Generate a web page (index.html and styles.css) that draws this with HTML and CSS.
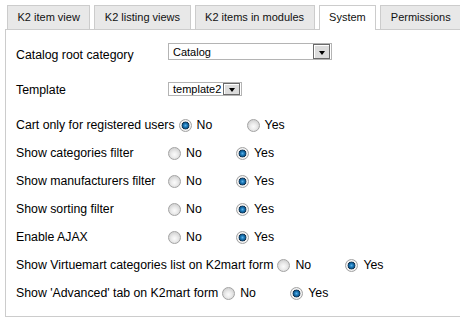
FILE: index.html
```html
<!DOCTYPE html>
<html>
<head>
<meta charset="utf-8">
<link rel="stylesheet" href="styles.css">
</head>
<body>
<div class="wrap">
  <ul class="tabs">
    <li class="tab">K2 item view</li>
    <li class="tab">K2 listing views</li>
    <li class="tab">K2 items in modules</li>
    <li class="tab active">System</li>
    <li class="tab">Permissions</li>
  </ul>
  <div class="panel">
    <div class="row tall">
      <span class="label">Catalog root category</span>
      <div class="select wide"><span class="value">Catalog</span><span class="btn"><span class="tri"></span></span></div>
    </div>
    <div class="row tall">
      <span class="label">Template</span>
      <div class="select small"><span class="value">template2</span><span class="btn"><span class="tri"></span></span></div>
    </div>
    <div class="radios">
      <div class="row">
        <span class="label">Cart only for registered users</span>
        <label class="opt"><input type="radio" name="r1" checked><span>No</span></label>
        <label class="opt"><input type="radio" name="r1"><span>Yes</span></label>
      </div>
      <div class="row">
        <span class="label">Show categories filter</span>
        <label class="opt"><input type="radio" name="r2"><span>No</span></label>
        <label class="opt"><input type="radio" name="r2" checked><span>Yes</span></label>
      </div>
      <div class="row">
        <span class="label">Show manufacturers filter</span>
        <label class="opt"><input type="radio" name="r3"><span>No</span></label>
        <label class="opt"><input type="radio" name="r3" checked><span>Yes</span></label>
      </div>
      <div class="row">
        <span class="label">Show sorting filter</span>
        <label class="opt"><input type="radio" name="r4"><span>No</span></label>
        <label class="opt"><input type="radio" name="r4" checked><span>Yes</span></label>
      </div>
      <div class="row">
        <span class="label">Enable AJAX</span>
        <label class="opt"><input type="radio" name="r5"><span>No</span></label>
        <label class="opt"><input type="radio" name="r5" checked><span>Yes</span></label>
      </div>
      <div class="row">
        <span class="label">Show Virtuemart categories list on K2mart form</span>
        <label class="opt"><input type="radio" name="r6"><span>No</span></label>
        <label class="opt"><input type="radio" name="r6" checked><span>Yes</span></label>
      </div>
      <div class="row">
        <span class="label">Show 'Advanced' tab on K2mart form</span>
        <label class="opt"><input type="radio" name="r7"><span>No</span></label>
        <label class="opt"><input type="radio" name="r7" checked><span>Yes</span></label>
      </div>
    </div>
  </div>
</div>
</body>
</html>
```

FILE: styles.css
```css
html, body {
  margin: 0;
  padding: 0;
  background: #fff;
  overflow: hidden;
}
body {
  font-family: "Liberation Sans", Arial, sans-serif;
  font-size: 12.3px;
  color: #000;
}
.wrap {
  padding: 5px 0 0 5px;
  width: 470px;
}
.tabs {
  list-style: none;
  margin: 0 0 0 2px;
  padding: 0;
  display: flex;
  gap: 4px;
  position: relative;
  z-index: 1;
}
.tab {
  height: 23px;
  line-height: 23px;
  padding: 0 9.5px;
  font-size: 11px;
  background: #e8e8e8;
  border: 1px solid #cccccc;
  border-bottom: none;
  color: #111;
}
.tab.active {
  background: #fff;
  height: 24px;
}
.panel {
  border: 1px solid #cccccc;
  margin-top: -1px;
  padding: 8px 10px 9px 10px;
  width: 460px;
  box-sizing: border-box;
}
.row {
  display: flex;
  align-items: center;
  height: 28px;
  white-space: nowrap;
}
.row.tall {
  height: 35px;
  align-items: flex-start;
}
.row.tall .label {
  margin-top: 10px;
  min-width: 152px;
}
.radios {
  margin-top: 3px;
}
.label {
  min-width: 148px;
}
.opt {
  display: flex;
  align-items: center;
  width: 68px;
}
.opt input {
  -webkit-appearance: none;
  appearance: none;
  width: 13px;
  height: 13px;
  margin: 0 5px 0 4px;
  border-radius: 50%;
  border: 1px solid #a3a3a3;
  background: radial-gradient(circle at 50% 60%, #fbfbfb 0, #ececec 3px, #d6d6d6 6px);
  box-sizing: border-box;
  flex: none;
}
.opt input:checked {
  background: radial-gradient(circle at 50% 50%, #5fb3e8 0, #1f7cbc 1.6px, #0e5a90 2.8px, #16304a 3.6px, #e9e9e9 4.2px, #f4f4f4 5px, #d4d4d4 6px);
}
.select {
  display: flex;
  align-items: center;
  border: 1px solid #b4b4b4;
  background: #fff;
  font-size: 11px;
  box-sizing: border-box;
  margin-top: 5px;
}
.select.wide {
  width: 164px;
  height: 17px;
}
.select.small {
  width: 74px;
  height: 14px;
  margin-top: 9px;
}
.value {
  flex: 1;
  padding-left: 4px;
}
.btn {
  display: flex;
  align-items: flex-end;
  justify-content: center;
  box-sizing: border-box;
  border: 1px solid #6a6a6a;
  box-shadow: inset 1px 1px 0 #fff;
  background: #dcdcdc;
  margin-right: 1px;
}
.select.wide .btn {
  width: 17px;
  height: 15px;
  padding-bottom: 3px;
}
.select.small .btn {
  width: 17px;
  height: 12px;
  padding-bottom: 2px;
}
.tri {
  width: 0;
  height: 0;
  border-left: 3.5px solid transparent;
  border-right: 3.5px solid transparent;
  border-top: 4px solid #000;
}
```
